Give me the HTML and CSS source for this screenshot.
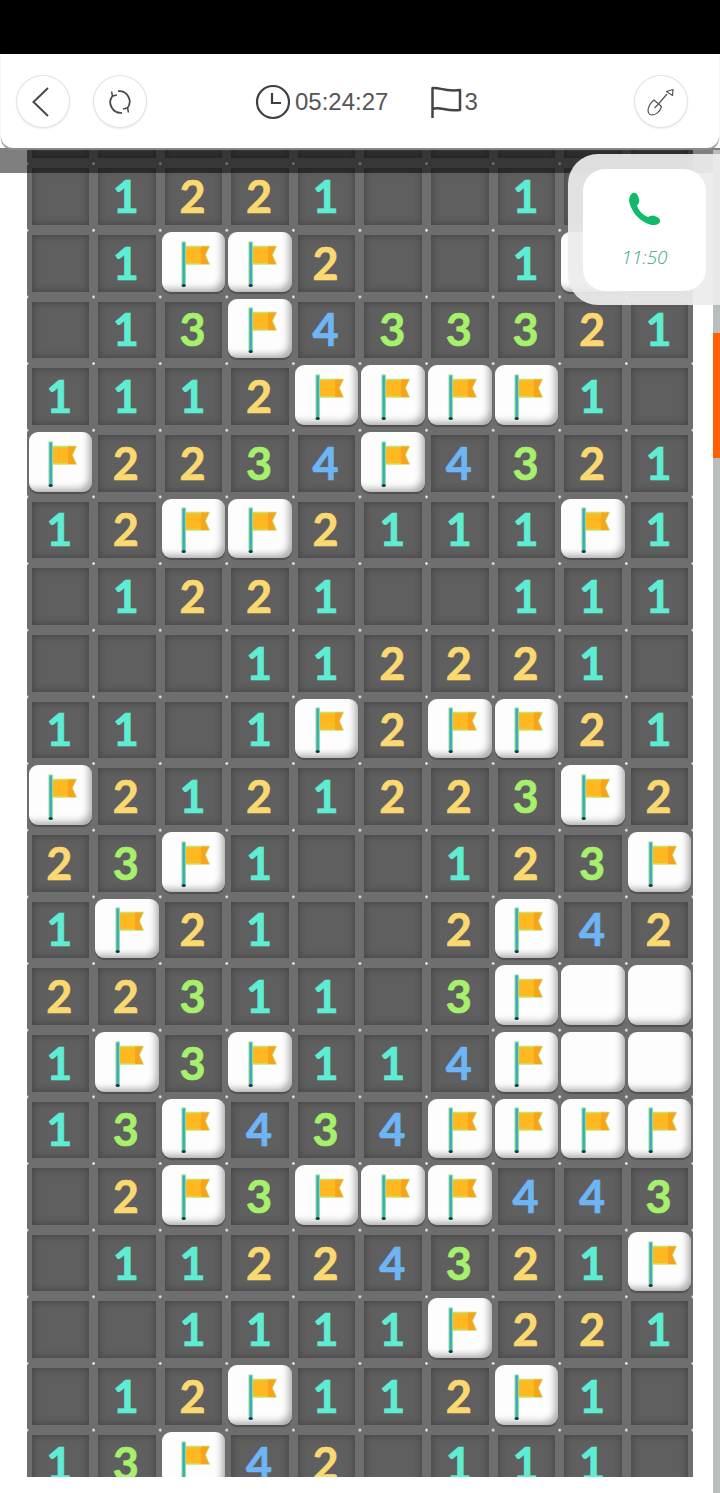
FILE: index.html
```html
<!DOCTYPE html>
<html lang="en">
<head>
    <meta charset="UTF-8">
    <meta name="viewport" content="width=device-width, initial-scale=1.0">
    <title>Minesweeper</title>
    <link rel="stylesheet" href="styles.css">
</head>
<body>
    <svg class="defs" width="0" height="0">
        <symbol id="flag" viewBox="0 0 62 60">
            <path d="M23 14.500h24l-4 8.500 4 9H23z" fill="#ffb81f" stroke="#c4e46c" stroke-width="1.600" stroke-linejoin="round"/>
            <path d="M39 14.500h8l-4 8.500 4 9h-8z" fill="#f9a31c"/>
            <rect x="20" y="10" width="3.400" height="44" fill="#3fa9b8" stroke="#8fe0a0" stroke-width="1"/>
            <ellipse cx="21.700" cy="53.500" rx="2" ry="1.500" fill="#14394a"/>
        </symbol>
    </svg>
    <div class="screen">
        <div class="status-bar"></div>

        <header class="topbar">
            <button class="round-btn">
                <svg width="24" height="30" viewBox="0 0 24 30"><path d="M17 1 2.500 15 17 29" fill="none" stroke="#4a4a4a" stroke-width="2"/></svg>
            </button>
            <button class="round-btn">
                <svg width="28" height="28" viewBox="0 0 28 28" fill="none" stroke="#4a4a4a" stroke-width="1.800">
                    <path d="M6.500 8A10.500 10.500 0 0 0 16 24.800"/>
                    <path d="M12 3.200A10.500 10.500 0 0 1 21.500 20"/>
                    <path d="M11 7 6.500 8 5.500 3.500" stroke-width="1.500"/>
                    <path d="M17 21l4.500-1 1 4.500" stroke-width="1.500"/>
                </svg>
            </button>
            <div class="stats">
                <svg width="36" height="36" viewBox="0 0 36 36" fill="none" stroke="#3f3f3f" stroke-width="2.200">
                    <circle cx="18" cy="18" r="16"/>
                    <path d="M17 9v10h9"/>
                </svg>
                <span class="time">05:24:27</span>
                <svg class="flag-icon" width="32" height="34" viewBox="0 0 32 34" fill="none" stroke="#444" stroke-width="2.500" stroke-linejoin="round">
                    <path d="M2.500 33V3c7.500-1 11.500 4 27.500 2v20c-14 2-20-4-27.500-1"/>
                </svg>
                <span class="flag-count">3</span>
            </div>
            <button class="round-btn">
                <svg width="28" height="28" viewBox="0 0 28 28" fill="none" stroke="#555" stroke-width="1.200" stroke-linejoin="round">
                    <path d="M7 12l7.500 6.500C13 24 8 28 3 26.500 0 25 0 18 7 12z"/>
                    <path d="M7.500 20l3.500-3.500L20 6"/>
                    <path d="M19.500 3.500l6 4 .5-6z"/>
                </svg>
            </button>
        </header>

        <main class="viewport">
            <div class="board">
                <div class="cell"></div><div class="cell"></div><div class="cell"></div><div class="cell"></div><div class="cell"></div><div class="cell"></div><div class="cell"></div><div class="cell"></div><div class="cell"></div><div class="cell"></div>

                <div class="cell"></div><div class="cell n1">1</div><div class="cell n2">2</div><div class="cell n2">2</div><div class="cell n1">1</div><div class="cell"></div><div class="cell"></div><div class="cell n1">1</div><div class="cell"></div><div class="cell"></div>

                <div class="cell"></div><div class="cell n1">1</div><div class="cell flag"><svg><use href="#flag"/></svg></div><div class="cell flag"><svg><use href="#flag"/></svg></div><div class="cell n2">2</div><div class="cell"></div><div class="cell"></div><div class="cell n1">1</div><div class="cell flag"></div><div class="cell"></div>

                <div class="cell"></div><div class="cell n1">1</div><div class="cell n3">3</div><div class="cell flag"><svg><use href="#flag"/></svg></div><div class="cell n4">4</div><div class="cell n3">3</div><div class="cell n3">3</div><div class="cell n3">3</div><div class="cell n2">2</div><div class="cell n1">1</div>

                <div class="cell n1">1</div><div class="cell n1">1</div><div class="cell n1">1</div><div class="cell n2">2</div><div class="cell flag"><svg><use href="#flag"/></svg></div><div class="cell flag"><svg><use href="#flag"/></svg></div><div class="cell flag"><svg><use href="#flag"/></svg></div><div class="cell flag"><svg><use href="#flag"/></svg></div><div class="cell n1">1</div><div class="cell"></div>

                <div class="cell flag"><svg><use href="#flag"/></svg></div><div class="cell n2">2</div><div class="cell n2">2</div><div class="cell n3">3</div><div class="cell n4">4</div><div class="cell flag"><svg><use href="#flag"/></svg></div><div class="cell n4">4</div><div class="cell n3">3</div><div class="cell n2">2</div><div class="cell n1">1</div>

                <div class="cell n1">1</div><div class="cell n2">2</div><div class="cell flag"><svg><use href="#flag"/></svg></div><div class="cell flag"><svg><use href="#flag"/></svg></div><div class="cell n2">2</div><div class="cell n1">1</div><div class="cell n1">1</div><div class="cell n1">1</div><div class="cell flag"><svg><use href="#flag"/></svg></div><div class="cell n1">1</div>

                <div class="cell"></div><div class="cell n1">1</div><div class="cell n2">2</div><div class="cell n2">2</div><div class="cell n1">1</div><div class="cell"></div><div class="cell"></div><div class="cell n1">1</div><div class="cell n1">1</div><div class="cell n1">1</div>

                <div class="cell"></div><div class="cell"></div><div class="cell"></div><div class="cell n1">1</div><div class="cell n1">1</div><div class="cell n2">2</div><div class="cell n2">2</div><div class="cell n2">2</div><div class="cell n1">1</div><div class="cell"></div>

                <div class="cell n1">1</div><div class="cell n1">1</div><div class="cell"></div><div class="cell n1">1</div><div class="cell flag"><svg><use href="#flag"/></svg></div><div class="cell n2">2</div><div class="cell flag"><svg><use href="#flag"/></svg></div><div class="cell flag"><svg><use href="#flag"/></svg></div><div class="cell n2">2</div><div class="cell n1">1</div>

                <div class="cell flag"><svg><use href="#flag"/></svg></div><div class="cell n2">2</div><div class="cell n1">1</div><div class="cell n2">2</div><div class="cell n1">1</div><div class="cell n2">2</div><div class="cell n2">2</div><div class="cell n3">3</div><div class="cell flag"><svg><use href="#flag"/></svg></div><div class="cell n2">2</div>

                <div class="cell n2">2</div><div class="cell n3">3</div><div class="cell flag"><svg><use href="#flag"/></svg></div><div class="cell n1">1</div><div class="cell"></div><div class="cell"></div><div class="cell n1">1</div><div class="cell n2">2</div><div class="cell n3">3</div><div class="cell flag"><svg><use href="#flag"/></svg></div>

                <div class="cell n1">1</div><div class="cell flag"><svg><use href="#flag"/></svg></div><div class="cell n2">2</div><div class="cell n1">1</div><div class="cell"></div><div class="cell"></div><div class="cell n2">2</div><div class="cell flag"><svg><use href="#flag"/></svg></div><div class="cell n4">4</div><div class="cell n2">2</div>

                <div class="cell n2">2</div><div class="cell n2">2</div><div class="cell n3">3</div><div class="cell n1">1</div><div class="cell n1">1</div><div class="cell"></div><div class="cell n3">3</div><div class="cell flag"><svg><use href="#flag"/></svg></div><div class="cell flag"></div><div class="cell flag"></div>

                <div class="cell n1">1</div><div class="cell flag"><svg><use href="#flag"/></svg></div><div class="cell n3">3</div><div class="cell flag"><svg><use href="#flag"/></svg></div><div class="cell n1">1</div><div class="cell n1">1</div><div class="cell n4">4</div><div class="cell flag"><svg><use href="#flag"/></svg></div><div class="cell flag"></div><div class="cell flag"></div>

                <div class="cell n1">1</div><div class="cell n3">3</div><div class="cell flag"><svg><use href="#flag"/></svg></div><div class="cell n4">4</div><div class="cell n3">3</div><div class="cell n4">4</div><div class="cell flag"><svg><use href="#flag"/></svg></div><div class="cell flag"><svg><use href="#flag"/></svg></div><div class="cell flag"><svg><use href="#flag"/></svg></div><div class="cell flag"><svg><use href="#flag"/></svg></div>

                <div class="cell"></div><div class="cell n2">2</div><div class="cell flag"><svg><use href="#flag"/></svg></div><div class="cell n3">3</div><div class="cell flag"><svg><use href="#flag"/></svg></div><div class="cell flag"><svg><use href="#flag"/></svg></div><div class="cell flag"><svg><use href="#flag"/></svg></div><div class="cell n4">4</div><div class="cell n4">4</div><div class="cell n3">3</div>

                <div class="cell"></div><div class="cell n1">1</div><div class="cell n1">1</div><div class="cell n2">2</div><div class="cell n2">2</div><div class="cell n4">4</div><div class="cell n3">3</div><div class="cell n2">2</div><div class="cell n1">1</div><div class="cell flag"><svg><use href="#flag"/></svg></div>

                <div class="cell"></div><div class="cell"></div><div class="cell n1">1</div><div class="cell n1">1</div><div class="cell n1">1</div><div class="cell n1">1</div><div class="cell flag"><svg><use href="#flag"/></svg></div><div class="cell n2">2</div><div class="cell n2">2</div><div class="cell n1">1</div>

                <div class="cell"></div><div class="cell n1">1</div><div class="cell n2">2</div><div class="cell flag"><svg><use href="#flag"/></svg></div><div class="cell n1">1</div><div class="cell n1">1</div><div class="cell n2">2</div><div class="cell flag"><svg><use href="#flag"/></svg></div><div class="cell n1">1</div><div class="cell"></div>

                <div class="cell n1">1</div><div class="cell n3">3</div><div class="cell flag"><svg><use href="#flag"/></svg></div><div class="cell n4">4</div><div class="cell n2">2</div><div class="cell"></div><div class="cell n1">1</div><div class="cell n1">1</div><div class="cell n1">1</div><div class="cell"></div>
            </div>
            <div class="top-shade"></div>
        </main>

        <div class="scroll-track"><div class="scroll-thumb"></div></div>

        <div class="call-widget">
            <div class="call-card">
                <svg width="34" height="34" viewBox="0 0 34 34"><path d="M5 1C8 0 10 3 11 7 12 10 10 12 9 14c2 5 6 9 11 11 3-2 6-2 9 0 4 2 4 5 1 7-3 2-8 1-12-1C10 27 4 20 1.500 11 .5 7 2 2 5 1z" fill="#0fba68"/></svg>
                <span class="call-time">11:50</span>
            </div>
        </div>
    </div>
</body>
</html>
```

FILE: styles.css
```css
body {
    margin: 0;
    background-color: white;
    font-family: "Liberation Sans", Arial, sans-serif;
}
.defs {
    position: absolute;
}
.screen {
    position: relative;
    width: 720px;
    height: 1493px;
    overflow: hidden;
    background-color: white;
}
.status-bar {
    height: 54px;
    background-color: black;
}
.topbar {
    position: relative;
    z-index: 3;
    box-sizing: border-box;
    height: 94px;
    margin: 0 1px;
    padding: 1px 31px 0 15px;
    display: flex;
    align-items: center;
    gap: 23px;
    background-color: white;
    border-radius: 0 0 12px 12px;
    box-shadow: 0 2px 1px #8c8c8c;
}
.round-btn {
    flex: none;
    width: 54px;
    height: 53px;
    padding: 0;
    display: flex;
    align-items: center;
    justify-content: center;
    background-color: white;
    border: 1px solid #e2e2e2;
    border-radius: 50%;
    box-shadow: 0 1px 2px rgba(0,0,0,0.08);
}
.stats {
    flex: 1;
    display: flex;
    align-items: center;
    padding-left: 85px;
    color: #555;
    font-size: 24px;
}
.time {
    margin-left: 4px;
}
.flag-icon {
    margin-left: 42px;
}
.flag-count {
    margin-left: 2px;
}
.viewport {
    position: relative;
    height: 1329px;
    overflow: hidden;
}
.board {
    width: 666px;
    margin: -51.33px 0 0 27px;
    display: grid;
    grid-template-columns: repeat(10, 66.6px);
    grid-auto-rows: 66.67px;
    background-color: #6e6e6e;
    background-image: radial-gradient(circle, #fff 0.8px, transparent 1.6px);
    background-size: 66.6px 66.67px;
    background-position: 33.3px 33.33px;
}
.cell {
    margin: 5px 4.5px;
    padding-right: 2px;
    display: flex;
    align-items: center;
    justify-content: center;
    background-color: #5f5f5f;
    box-shadow: inset 0 0 9px rgba(0,0,0,0.32);
    font-family: Lato, sans-serif;
    font-weight: 700;
    font-size: 45px;
    line-height: 1;
    -webkit-text-stroke: 0.7px currentColor;
}
.n1 { color: #5eedd2; }
.n2 { color: #fbd970; }
.n3 { color: #a6f06c; }
.n4 { color: #6db5f5; }
.flag {
    margin: 2px 1.5px 5px;
    padding-right: 0;
    background-color: #fdfdfd;
    border-radius: 9px;
    box-shadow: inset -6px -6px 7px -3px rgba(0,0,0,0.32), 0 2px 1px #505050;
}
.flag svg {
    width: 62px;
    height: 60px;
}
.top-shade {
    position: absolute;
    top: 0;
    left: 0;
    right: 0;
    height: 25px;
    background-color: rgba(0,0,0,0.5);
}
.scroll-track {
    position: absolute;
    top: 150px;
    right: 0;
    bottom: 0;
    width: 7px;
    background-color: #b9bdbb;
}
.scroll-thumb {
    height: 125px;
    margin-top: 183px;
    background-color: #ff5f00;
}
.call-widget {
    position: absolute;
    z-index: 4;
    top: 154px;
    left: 568px;
    right: 0;
    box-sizing: border-box;
    height: 151px;
    padding: 15px 14px 14px 15px;
    display: flex;
    background-color: rgba(236,236,236,0.93);
    border-radius: 30px 0 0 30px;
}
.call-card {
    flex: 1;
    padding-top: 23px;
    display: flex;
    flex-direction: column;
    align-items: center;
    gap: 20px;
    background-color: white;
    border-radius: 22px;
}
.call-time {
    color: #3aa981;
    font-family: "Open Sans", sans-serif;
    font-style: italic;
    font-weight: 300;
    font-size: 19px;
    line-height: 22px;
}
```
